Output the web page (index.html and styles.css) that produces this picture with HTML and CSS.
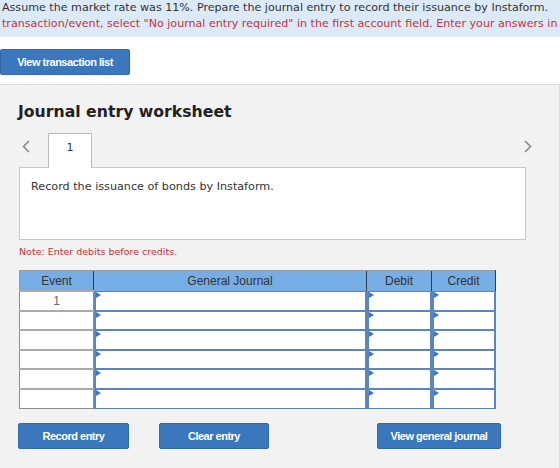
FILE: index.html
```html
<!DOCTYPE html>
<html lang="en">

<head>
    <meta charset="UTF-8">
    <meta name="viewport" content="width=device-width, initial-scale=1.0">
    <title>Journal entry worksheet</title>
    <link rel="stylesheet" href="styles.css">
</head>

<body>

    <div class="instructions">
        <p>Assume the market rate was 11%. Prepare the journal entry to record their issuance by Instaform.</p>
        <p class="warn">transaction/event, select "No journal entry required" in the first account field. Enter your answers in</p>
    </div>

    <div class="toolbar">
        <button class="btn btn-list">View transaction list</button>
    </div>

    <div class="worksheet">
        <h2>Journal entry worksheet</h2>

        <div class="tabs">
            <span class="chevron">
                <svg width="8" height="13" viewBox="0 0 8 13"><polyline points="7,1 1.5,6.5 7,12" fill="none" stroke="#8a8a8a" stroke-width="1.6"/></svg>
            </span>
            <div class="tab">1</div>
            <span class="chevron chevron-right">
                <svg width="8" height="13" viewBox="0 0 8 13"><polyline points="1,1 6.5,6.5 1,12" fill="none" stroke="#8a8a8a" stroke-width="1.6"/></svg>
            </span>
        </div>

        <div class="entry-box">
            <p>Record the issuance of bonds by Instaform.</p>
        </div>

        <p class="note">Note: Enter debits before credits.</p>

        <table class="journal">
            <thead>
                <tr>
                    <th class="col-event">Event</th>
                    <th class="col-account">General Journal</th>
                    <th class="col-debit">Debit</th>
                    <th class="col-credit">Credit</th>
                </tr>
            </thead>
            <tbody id="journalRows"></tbody>
        </table>

        <div class="actions">
            <button class="btn btn-record">Record entry</button>
            <button class="btn btn-clear">Clear entry</button>
            <button class="btn btn-view">View general journal</button>
        </div>
    </div>

    <script>
        const rows = document.getElementById('journalRows');
        for (let i = 0; i < 6; i++) {
            const event = i === 0 ? '1' : '';
            rows.innerHTML += `
                <tr>
                    <td class="event">${event}</td>
                    <td><div class="cell"></div></td>
                    <td><div class="cell"></div></td>
                    <td><div class="cell"></div></td>
                </tr>
            `;
        }
    </script>

</body>

</html>
```

FILE: styles.css
```css
body {
    margin: 0;
    font-family: "DejaVu Sans", Verdana, sans-serif;
    color: #333;
    background-color: white;
}

p {
    margin: 0;
}

.instructions {
    background-color: #dceaf7;
    padding: 0 0 5px 2px;
    font-size: 11.1px;
    line-height: 16px;
    white-space: nowrap;
    overflow: hidden;
    color: #333;
}

.warn {
    color: #c8313a;
}

.toolbar {
    padding: 12px 0 9px;
}

.btn {
    display: block;
    background-color: #3a77bc;
    color: white;
    border: 1px solid #3369a8;
    border-radius: 2px;
    font-family: "Liberation Sans", Arial, sans-serif;
    font-weight: bold;
    font-size: 11px;
    letter-spacing: -0.5px;
    height: 26px;
    padding: 0;
}

.btn-list {
    width: 130px;
}

.worksheet {
    background-color: #f2f2f2;
    border-top: 1px solid #dcdcdc;
    border-right: 1px solid #dcdcdc;
    padding: 0 0 20px 18px;
}

.worksheet h2 {
    margin: 0;
    padding-top: 17px;
    font-size: 15.7px;
    line-height: 20px;
    color: #222;
}

.tabs {
    display: flex;
    align-items: flex-start;
    margin-top: 11px;
    width: 514px;
    height: 34px;
}

.chevron {
    display: flex;
    width: 30px;
    padding-top: 7px;
    padding-left: 4px;
    box-sizing: border-box;
}

.chevron-right {
    margin-left: auto;
    width: 8px;
    padding-left: 0;
}

.tab {
    width: 42px;
    height: 34px;
    background-color: white;
    border: 1px solid #b9b9b9;
    border-bottom: none;
    text-align: center;
    font-size: 11px;
    line-height: 28px;
    color: #333;
    position: relative;
    z-index: 1;
}

.entry-box {
    width: 505px;
    height: 71px;
    margin-left: 1px;
    background-color: white;
    border: 1px solid #c8c8c8;
}

.entry-box p {
    padding: 12px 0 0 11px;
    font-size: 11.2px;
    line-height: 14px;
}

.note {
    color: #c8313a;
    font-size: 9.5px;
    margin: 5px 0 0 1px;
    line-height: 14px;
}

.journal {
    margin-top: 11px;
    margin-left: 1px;
    border-collapse: collapse;
    table-layout: fixed;
    width: 477px;
    font-family: "Liberation Sans", Arial, sans-serif;
    font-size: 12px;
}

.journal th {
    background-color: #76ade5;
    color: #333;
    font-weight: normal;
    height: 19px;
    padding: 0;
    border-top: 1px solid #9a9a9a;
    border-left: 1px solid #2e3c4f;
}

.journal th:first-child {
    border-left: 1px solid #9a9a9a;
}

.journal th:last-child {
    border-right: 1px solid #2e3c4f;
}

.col-event {
    width: 73px;
}

.col-debit {
    width: 64px;
}

.col-credit {
    width: 63px;
}

.journal td {
    padding: 0;
    height: 19.6px;
    background-color: white;
}

.journal td.event {
    border: 1px solid #8c8c8c;
    border-top: 2px solid #a9a9a9;
    text-align: center;
    vertical-align: top;
    color: #666;
    line-height: 14px;
    padding-top: 2px;
    box-sizing: border-box;
}

.cell {
    position: relative;
    height: 19.6px;
    border: 2px solid #5b86bd;
    border-top-width: 1.5px;
    border-bottom-width: 1.5px;
    box-sizing: border-box;
    background-color: white;
}

.cell::before {
    content: "";
    position: absolute;
    top: 0;
    left: 0;
    border-top: 3px solid transparent;
    border-bottom: 3px solid transparent;
    border-left: 5px solid #3a77bc;
}

.actions {
    display: flex;
    margin-top: 14px;
    width: 483px;
}

.btn-record {
    width: 111px;
}

.btn-clear {
    width: 110px;
    margin-left: 30px;
}

.btn-view {
    width: 124px;
    margin-left: auto;
}
```
